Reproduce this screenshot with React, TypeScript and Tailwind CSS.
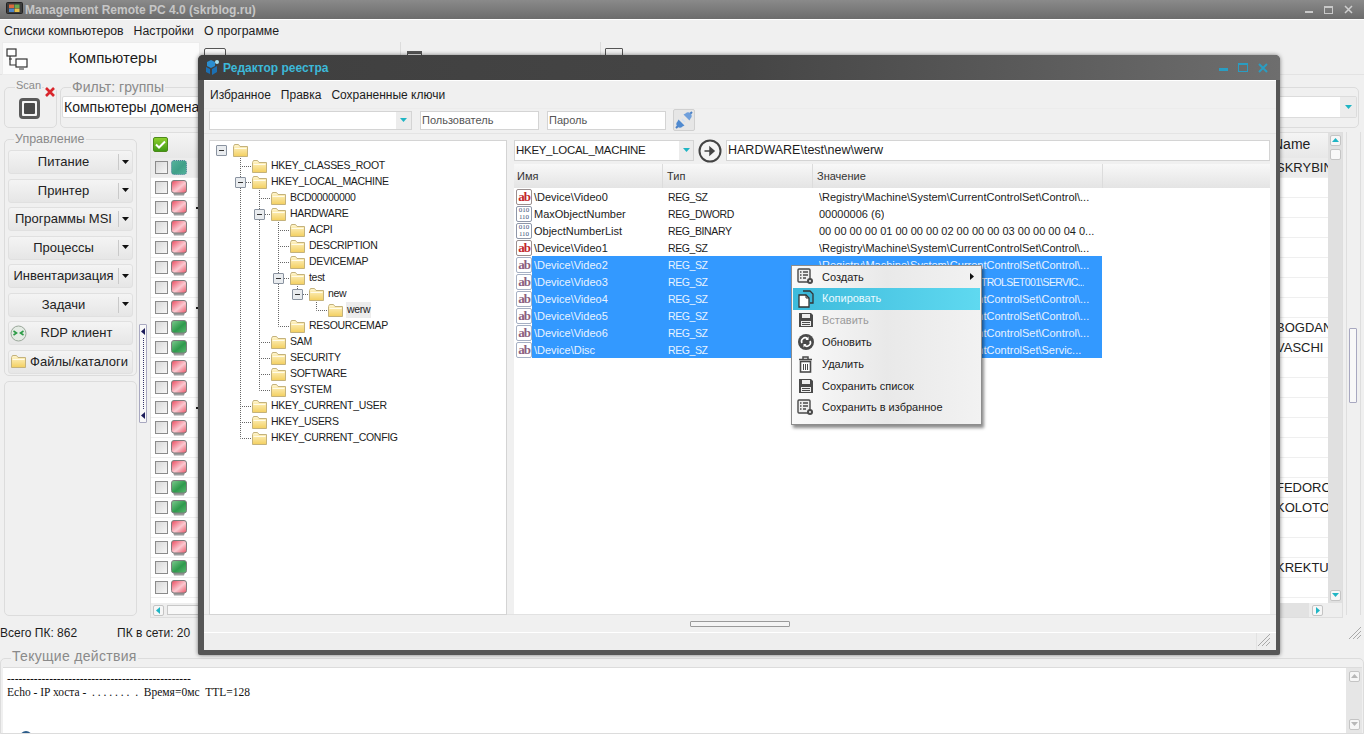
import type { ReactNode } from "react";

const ui = "[font-family:'Liberation_Sans',Arial,sans-serif]";

type TreeNode = { label: string; depth: number; open?: boolean };

const treeNodes: TreeNode[] = [
  { label: "", depth: 0, open: true },
  { label: "HKEY_CLASSES_ROOT", depth: 1 },
  { label: "HKEY_LOCAL_MACHINE", depth: 1, open: true },
  { label: "BCD00000000", depth: 2 },
  { label: "HARDWARE", depth: 2, open: true },
  { label: "ACPI", depth: 3 },
  { label: "DESCRIPTION", depth: 3 },
  { label: "DEVICEMAP", depth: 3 },
  { label: "test", depth: 3, open: true },
  { label: "new", depth: 4, open: true },
  { label: "werw", depth: 5 },
  { label: "RESOURCEMAP", depth: 3 },
  { label: "SAM", depth: 2 },
  { label: "SECURITY", depth: 2 },
  { label: "SOFTWARE", depth: 2 },
  { label: "SYSTEM", depth: 2 },
  { label: "HKEY_CURRENT_USER", depth: 1 },
  { label: "HKEY_USERS", depth: 1 },
  { label: "HKEY_CURRENT_CONFIG", depth: 1 },
];

const ctl = "\\Registry\\Machine\\System\\CurrentControlSet\\Control\\...";

const regRows = [
  { name: "\\Device\\Video0", type: "REG_SZ", value: ctl, kind: "sz" },
  { name: "MaxObjectNumber", type: "REG_DWORD", value: "00000006 (6)", kind: "bin" },
  { name: "ObjectNumberList", type: "REG_BINARY", value: "00 00 00 00 01 00 00 00 02 00 00 00 03 00 00 00 04 0...", kind: "bin" },
  { name: "\\Device\\Video1", type: "REG_SZ", value: ctl, kind: "sz" },
  { name: "\\Device\\Video2", type: "REG_SZ", value: ctl, kind: "sz", sel: true },
  { name: "\\Device\\Video3", type: "REG_SZ", value: "\\REGISTRY\\MACHINE\\SYSTEM\\CONTROLSET001\\SERVIC...", kind: "sz", sel: true, caps: true },
  { name: "\\Device\\Video4", type: "REG_SZ", value: ctl, kind: "sz", sel: true },
  { name: "\\Device\\Video5", type: "REG_SZ", value: ctl, kind: "sz", sel: true },
  { name: "\\Device\\Video6", type: "REG_SZ", value: ctl, kind: "sz", sel: true },
  { name: "\\Device\\Disc", type: "REG_SZ", value: "\\Registry\\Machine\\System\\CurrentControlSet\\Servic...", kind: "sz", sel: true },
];

// row index -> surname visible to the right of the dialog
const names: Record<number, string> = { 0: "SKRYBIN", 8: "BOGDAN", 9: "VASCHI", 16: "FEDORO", 17: "KOLOTO", 20: "KREKTU" };
const greenRows = [8, 9, 16, 17, 20];
const speckRows = [2, 7, 12];

const sideButtons = ["Питание", "Принтер", "Программы MSI", "Процессы", "Инвентаризация", "Задачи"];

function Folder() {
  return (
    <svg width="15" height="13" viewBox="0 0 15 13" className="shrink-0">
      <defs>
        <linearGradient id="fold" x1="0" y1="0" x2="0" y2="1">
          <stop offset="0" stopColor="#fff6cf" />
          <stop offset="1" stopColor="#f3cf5f" />
        </linearGradient>
      </defs>
      <path d="M.5 2.500V12.500h14V2.500H7L5.500.5h-4z" fill="url(#fold)" stroke="#c4b27c" />
      <path d="M1.500 4.500h12" stroke="#fffbe8" />
    </svg>
  );
}

function Monitor({ tone }: { tone: "red" | "green" | "teal" }) {
  const stops =
    tone === "red"
      ? ["#e8465a", "#fbc9d1", "#ea5063"]
      : tone === "green"
        ? ["#7fca90", "#2f9a4c", "#5dba74"]
        : ["#56b39c", "#3f9f88", "#56b39c"];
  const id = `mon-${tone}`;
  return (
    <svg width="16" height="16" viewBox="0 0 16 16" className="shrink-0">
      <defs>
        <linearGradient id={id} x1="0" y1="0" x2="1" y2="1">
          <stop offset="0" stopColor={stops[0]} />
          <stop offset=".55" stopColor={stops[1]} />
          <stop offset="1" stopColor={stops[2]} />
        </linearGradient>
      </defs>
      {tone !== "teal" && <path d="M2 12h12l-1 3.500H3z" fill="#9c9c9c" />}
      <rect x=".5" y=".5" width="15" height={tone === "teal" ? 14 : 12.5} rx="2.500" fill={`url(#${id})`} stroke={tone === "teal" ? "#4a7f9a" : "#7d7d7d"} strokeDasharray={tone === "teal" ? "1 1" : undefined} />
    </svg>
  );
}

function CheckBox() {
  return <span className="block w-[13px] h-[13px] shrink-0 border border-[#8b8b8b] bg-gradient-to-br from-[#d8d8d8] to-[#f6f6f6]" />;
}

function Arrow({ dir = "down", color = "#1fb5c4" }: { dir?: "down" | "up" | "left" | "right"; color?: string }) {
  const pts = { down: "0,1 7,1 3.5,5", up: "0,5 7,5 3.5,1", left: "5,0 5,7 1,3.5", right: "2,0 2,7 6,3.5" }[dir];
  return (
    <svg width="7" height="7" viewBox="0 0 7 7" className="shrink-0">
      <polygon points={pts} fill={color} />
    </svg>
  );
}

function ScrollBtn({ dir, color }: { dir: "down" | "up" | "left" | "right"; color?: string }) {
  return (
    <span className="flex items-center justify-center w-[11px] h-[11px] shrink-0 bg-[#f6f6f6] border border-[#c4c4c4] rounded-[2px]">
      <Arrow dir={dir} color={color} />
    </span>
  );
}

function GroupLabel({ children, className }: { children: ReactNode; className: string }) {
  return <span className={`absolute bg-[#f0f0f0] text-[#8a8a8a] leading-none ${className}`}>{children}</span>;
}

function MenuIcon({ name }: { name: string }) {
  const c = "#4a4a4a";
  if (name === "list")
    return (
      <svg width="17" height="17" viewBox="0 0 17 17">
        <rect x="1" y="1" width="12" height="13" rx="1" fill="#eee" stroke={c} strokeWidth="1.400" />
        <path d="M3 4h1.500M6 4h5M3 7h1.500M6 7h5M3 10h1.500M6 10h3" stroke={c} strokeWidth="1.400" />
        <circle cx="13" cy="13" r="3" fill={c} />
        <circle cx="13" cy="13" r="1" fill="#eee" />
      </svg>
    );
  if (name === "copy")
    return (
      <svg width="18" height="18" viewBox="0 0 18 18">
        <path d="M6 1h7l3 3v9h-3" fill="#39b5d6" stroke="#333" strokeWidth="1.300" />
        <path d="M2 5h7l3 3v9H2z" fill="#fff" stroke="#333" strokeWidth="1.300" />
        <path d="M9 5v3h3" fill="none" stroke="#333" />
      </svg>
    );
  if (name === "save")
    return (
      <svg width="16" height="16" viewBox="0 0 16 16">
        <path d="M1 1h12l2 2v12H1z" fill={c} />
        <rect x="4" y="2" width="8" height="4" fill="#eee" />
        <rect x="3" y="9" width="10" height="5" fill="#eee" />
        <path d="M4 10.500h8M4 12.500h8" stroke={c} />
      </svg>
    );
  if (name === "refresh")
    return (
      <svg width="16" height="16" viewBox="0 0 16 16">
        <circle cx="8" cy="8" r="8" fill={c} />
        <path d="M4 9a3.500 3.500 0 0 1 5.500-4.200M12 7a3.500 3.500 0 0 1-5.500 4.200" fill="none" stroke="#fff" strokeWidth="1.600" />
        <path d="M10.500 2.500v3.500H7.500zM5.500 13.500V10h3z" fill="#fff" />
      </svg>
    );
  return (
    <svg width="15" height="17" viewBox="0 0 15 17">
      <path d="M1 3.500h13M5 3V1h5v2" fill="none" stroke={c} strokeWidth="1.500" />
      <rect x="2.500" y="5.500" width="10" height="10.500" fill="#fff" stroke={c} strokeWidth="1.600" />
      <path d="M5.500 8v6M7.500 8v6M9.500 8v6" stroke={c} />
    </svg>
  );
}

function RegIcon({ kind, selected }: { kind: string; selected?: boolean }) {
  if (kind === "sz")
    return (
      <span className={`flex items-end justify-center w-[16px] h-[16px] shrink-0 border ${selected ? "border-[#a6b0c4] text-[#8b5f80]" : "border-[#9a8f8f] text-[#c2272d]"} rounded-[2px] bg-white leading-none`}>
        <span className="[font-family:'Liberation_Serif',serif] text-[13px] font-bold tracking-[-1px] leading-[14px]">ab</span>
      </span>
    );
  return (
    <span className="flex flex-col items-center justify-center w-[16px] h-[16px] shrink-0 border border-[#8f97a8] rounded-[2px] bg-white text-[#3c4f78] [font-family:'Liberation_Serif',serif] text-[7px] leading-[7px]">
      <span>010</span>
      <span>110</span>
    </span>
  );
}

function Tree() {
  const rowH = 16;
  const lines: ReactNode[] = [];
  treeNodes.forEach((n, i) => {
    if (n.depth === 0) return;
    let p = i - 1;
    while (treeNodes[p].depth >= n.depth) p--;
    const x = 12.5 + 19 * n.depth - 1;
    const y = rowH * i + 8.5;
    lines.push(<path key={i} d={`M${x} ${rowH * p + 14}V${y}H${x + 11}`} fill="none" stroke="#666" strokeDasharray="1 1" />);
  });
  return (
    <div className="relative w-[298px] h-[475px] shrink-0 bg-white border border-[#d4d4d4] pt-[1px]">
      <svg className="absolute left-0 top-[1px] w-[200px] h-[320px]" viewBox="0 0 200 320">
        {lines}
      </svg>
      {treeNodes.map((n, i) => (
        <div key={i} className="relative flex items-center h-[16px] text-[10.5px] tracking-[-0.3px] text-[#1c1c1c]">
          <span className="shrink-0 w-[17px]" />
          <span className="shrink-0" style={{ width: 19 * n.depth }} />
          {n.open ? (
            <span
              className="absolute flex items-center justify-center w-[11px] h-[11px] bg-[#e9ecef] border border-[#8a93a0] rounded-[1px]"
              style={{ left: 6 + 19 * n.depth, top: 3 }}
            >
              <span className="block w-[5px] h-[1px] bg-[#333]" />
            </span>
          ) : null}
          <span className="ml-[6px]">
            <Folder />
          </span>
          {n.label && <span className={`ml-[3px] px-[1px] whitespace-nowrap ${n.label === "werw" ? "bg-[#ececec]" : ""}`}>{n.label}</span>}
        </div>
      ))}
    </div>
  );
}

function ContextMenu() {
  const items = [
    { icon: "list", label: "Создать", sub: true },
    { icon: "copy", label: "Копировать", active: true },
    { icon: "save", label: "Вставить", disabled: true },
    { icon: "refresh", label: "Обновить" },
    { icon: "trash", label: "Удалить" },
    { icon: "save", label: "Сохранить список" },
    { icon: "list", label: "Сохранить в избранное" },
  ];
  return (
    <div className="absolute left-[279px] top-[125px] w-[191px] h-[160px] px-[1px] border border-[#8d8d8d] bg-gradient-to-r from-[#fafafa] via-[#e9e9e9] to-[#f2f2f2] shadow-[2px_3px_3px_rgba(0,0,0,0.45)] text-[11px] text-[#222]">
      {items.map((it) => (
        <div
          key={it.label}
          className={`flex items-center h-[21.8px] ${it.active ? "bg-gradient-to-r from-[#3dbbdc] to-[#5fd9f0] text-[#eafaff]" : ""} ${it.disabled ? "text-[#9a9a9a]" : ""}`}
        >
          <span className="flex justify-center w-[29px] pr-[4px] shrink-0">
            <MenuIcon name={it.icon} />
          </span>
          <span className="flex-1 whitespace-nowrap">{it.label}</span>
          {it.sub && (
            <span className="mr-[5px]">
              <Arrow dir="right" color="#111" />
            </span>
          )}
        </div>
      ))}
    </div>
  );
}

function RegistryList() {
  return (
    <div className="relative flex-1 flex flex-col min-w-0">
      <div className="flex items-center h-[21px] shrink-0 ml-[2px] gap-[5px]">
        <div className="flex items-center w-[180px] h-[21px] bg-white border border-[#d4d4d4] text-[11.5px] tracking-[-0.3px] pl-[1px]">
          <span className="flex-1">HKEY_LOCAL_MACHINE</span>
          <span className="flex items-center justify-center w-[14px] h-full bg-[#ececec]">
            <Arrow />
          </span>
        </div>
        <svg width="24" height="24" viewBox="0 0 24 24" className="shrink-0 -mx-[1px]">
          <circle cx="12" cy="12" r="10.500" fill="#f4f4f4" stroke="#444" strokeWidth="2" />
          <path d="M6.500 12h7M12 8.500l4 3.500-4 3.500z" fill="#444" stroke="#444" strokeWidth="1.500" />
        </svg>
        <div className="flex items-center flex-1 h-[21px] bg-white border border-[#d4d4d4] text-[12.5px] pl-[1px]">HARDWARE\test\new\werw</div>
      </div>
      <div className="flex h-[24px] mt-[3px] shrink-0 ml-[2px] bg-gradient-to-b from-[#f8f8f8] to-[#e4e4e4] text-[11px] text-[#333] items-center">
        <span className="w-[149px] h-full flex items-center pl-[3px] border-r border-[#dcdcdc]">Имя</span>
        <span className="w-[150px] h-full flex items-center pl-[4px] border-r border-[#dcdcdc]">Тип</span>
        <span className="w-[290px] h-full flex items-center pl-[4px] border-r border-[#dcdcdc]">Значение</span>
      </div>
      <div className="relative flex-1 ml-[2px] bg-white text-[11px] text-[#1c1c1c]">
        {regRows.map((r) => (
          <div key={r.name} className="flex items-center h-[17px] pl-[2px] w-[588px]">
            <RegIcon kind={r.kind} selected={r.sel} />
            <div className={`flex items-center h-full flex-1 min-w-0 pt-[2px] ${r.sel ? "bg-[#3399ff] text-[#e8f3ff]" : ""}`}>
              <span className="w-[136px] pl-[2px] shrink-0 whitespace-nowrap">{r.name}</span>
              <span className="w-[151px] shrink-0 text-[10.5px] tracking-[-0.4px]">{r.type}</span>
              <span className={`whitespace-nowrap overflow-hidden ${r.caps ? "text-[10.5px] tracking-[-0.65px]" : ""}`}>{r.value}</span>
            </div>
          </div>
        ))}
      </div>
      <ContextMenu />
    </div>
  );
}

function RegistryDialog() {
  return (
    <div className={`absolute left-[198px] top-[55px] w-[1082px] h-[600px] flex flex-col rounded-t-[5px] rounded-b-[2px] bg-[#565656] shadow-[0_0_4px_rgba(0,0,0,0.5)] pl-[6px] pr-[4px] pb-[5px] ${ui}`}>
      <div className="flex items-center h-[25px] shrink-0 -ml-[6px] -mr-[4px] px-[6px] rounded-t-[5px] bg-gradient-to-r from-[#3f3f3f] via-[#454545] to-[#6e6e6e]">
        <svg width="16" height="18" viewBox="0 0 16 18" className="shrink-0">
          <path d="M7 1l4 2v4l-4 2-4-2V3z" fill="#2b8ed0" />
          <path d="M2 8l4 2v5l-4-2zM8 10l5-3v6l-5 3z" fill="#1c70b4" />
          <circle cx="13" cy="3" r="2" fill="#a8e1ef" />
        </svg>
        <span className="ml-[3px] flex-1 text-[12px] font-bold text-[#3cb9d9]">Редактор реестра</span>
        <span className="flex items-center gap-[10px] pr-[6px]">
          <span className="block w-[9px] h-[3px] mt-[4px] bg-[#2a9dc2]" />
          <span className="block w-[10px] h-[9px] border border-[#2a9dc2] border-t-[2px]" />
          <svg width="10" height="10" viewBox="0 0 10 10">
            <path d="M1 1l8 8M9 1l-8 8" stroke="#2a9dc2" strokeWidth="2" />
          </svg>
        </span>
      </div>
      <div className="flex-1 min-h-0 flex flex-col bg-[#f0f0f0]">
        <div className="flex items-center h-[28px] shrink-0 gap-[10px] pl-[6px] text-[12px] text-[#1c1c1c] border-t border-white">
          <span>Избранное</span>
          <span>Правка</span>
          <span>Сохраненные ключи</span>
        </div>
        <div className="flex items-center h-[26px] shrink-0 pl-[5px] text-[11px] text-[#555] pb-[3px] border-t border-[#ececec]">
          <div className="flex items-center justify-end w-[203px] h-[19px] bg-white border border-[#d4d4d4]">
            <span className="flex items-center justify-center w-[15px] h-full bg-[#ececec]">
              <Arrow />
            </span>
          </div>
          <div className="flex items-center w-[119px] h-[19px] ml-[8px] pl-[1px] bg-white border border-[#d4d4d4]">Пользователь</div>
          <div className="flex items-center w-[119px] h-[19px] ml-[8px] pl-[1px] bg-white border border-[#d4d4d4]">Пароль</div>
          <div className="flex items-center justify-center w-[22px] h-[22px] ml-[7px] bg-[#e6e6e6] border border-[#d0d0d0] rounded-[2px]">
            <svg width="18" height="18" viewBox="0 0 18 18">
              <path d="M1 17l4-4M13 5l4-4" stroke="#4a7fc4" strokeWidth="2" />
              <path d="M3.500 8.500l6 6-2 1a3 3 0 0 1-5-5z" fill="#4f8ad0" />
              <path d="M8.500 3.500l6 6 1-2a3 3 0 0 0-5-5z" fill="#6f9fdb" />
              <path d="M7 8l3 3" stroke="#cfe0f5" strokeWidth="1.500" />
            </svg>
          </div>
        </div>
        <div className="flex h-[481px] shrink-0 pl-[5px] pt-[6px] pr-[6px] gap-[5px] border-t border-[#e4e4e4] -mt-[1px]">
          <Tree />
          <RegistryList />
        </div>
        <div className="flex items-center justify-center h-[18px] pt-[1px] shrink-0 border-t border-[#e2e2e2]">
          <span className="block w-[100px] h-[6px] bg-[#f4f4f4] border border-[#9a9a9a] rounded-[1px]" />
        </div>
        <div className="flex-1 flex justify-end border-t border-white bg-[#eeeeee]">
          <span className="flex items-end justify-end w-[20px] pr-[5px] pb-[3px] border-l border-[#e2e2e2]">
            <Grip />
          </span>
        </div>
      </div>
    </div>
  );
}

function Grip() {
  return (
    <svg width="14" height="14" viewBox="0 0 14 14">
      <path d="M1 13L13 1M5 13l8-8M9 13l4-4" stroke="#a9a9a9" strokeWidth="1" />
    </svg>
  );
}

function SideButton({ children }: { children: ReactNode }) {
  return <div className="flex items-center h-[24px] bg-gradient-to-b from-[#f4f4f4] to-[#e6e6e6] border border-[#e0e0e0] rounded-[3px]">{children}</div>;
}

function SidePanel() {
  return (
    <div className="flex flex-col w-[133px] ml-[4px] shrink-0 pb-[2px]">
      <div className="relative h-[237px] mt-[10px] shrink-0 border border-[#dcdcdc] rounded-[5px] pt-[10px] px-[3px]">
        <GroupLabel className="left-[9px] -top-[7px] px-[1px] text-[12.5px]">Управление</GroupLabel>
        <div className="flex flex-col gap-[4.500px] text-[13px] text-[#222]">
          {sideButtons.map((label) => (
            <SideButton key={label}>
              <span className="flex-1 text-center whitespace-nowrap">{label}</span>
              <span className="flex items-center justify-center w-[14px] h-[16px] border-l border-[#c9c9c9]">
                <Arrow color="#111" />
              </span>
            </SideButton>
          ))}
          <SideButton>
            <svg width="17" height="17" viewBox="0 0 17 17" className="ml-[1px] shrink-0">
              <circle cx="8.500" cy="8.500" r="7.500" fill="#e4ebe4" stroke="#9aa79a" />
              <path d="M3.500 6l3 2-3 2M13.500 6l-3 2 3 2" fill="none" stroke="#2b9b45" strokeWidth="1.600" />
            </svg>
            <span className="flex-1 text-center pr-[6px]">RDP клиент</span>
          </SideButton>
          <SideButton>
            <span className="ml-[2px]">
              <Folder />
            </span>
            <span className="flex-1 text-center whitespace-nowrap">Файлы/каталоги</span>
          </SideButton>
        </div>
      </div>
      <div className="flex-1 mt-[5px] border border-[#dcdcdc] rounded-[5px]" />
    </div>
  );
}

function ComputerGrid() {
  const rows = Array.from({ length: 22 }, (_, i) => i);
  return (
    <div className="relative flex-1 min-w-0 flex flex-col mt-[3px] bg-[#eeeeee] border border-[#dedede]">
      <div className="flex-1 flex min-h-0">
        <div className="flex-1 min-w-0 overflow-hidden bg-white">
          <div className="flex items-center h-[25px] pb-[3px] bg-gradient-to-b from-[#f4f4f4] to-[#e8e8e8]">
            <span className="flex items-center justify-center w-[15px] h-[15px] ml-[2px] rounded-[2px] bg-gradient-to-b from-[#8ccf2c] to-[#3f9a14] border border-[#4c8a1a]">
              <svg width="11" height="9" viewBox="0 0 11 9">
                <path d="M1 4.500l3 3 6-6" fill="none" stroke="#fff" strokeWidth="2" />
              </svg>
            </span>
            <span className="flex-1" />
            <span className="w-[55px] shrink-0 text-[14px] text-[#222] whitespace-nowrap overflow-hidden">Name</span>
          </div>
          {rows.map((i) => (
            <div key={i} className={`flex items-center h-[20px] border-b border-[#efefef] ${i === 0 ? "bg-[#ececec]" : ""}`}>
              <span className="ml-[4px]">
                <CheckBox />
              </span>
              <span className="ml-[3px]">
                <Monitor tone={i === 0 ? "teal" : greenRows.includes(i) ? "green" : "red"} />
              </span>
              {speckRows.includes(i) && <span className="block w-[2px] h-[2px] ml-[9px] bg-[#222]" />}
              <span className="flex-1" />
              <span className="w-[52px] shrink-0 text-[13px] text-[#222] whitespace-nowrap overflow-hidden">{names[i] ?? ""}</span>
            </div>
          ))}
        </div>
        <div className="flex flex-col items-center justify-between w-[14px] shrink-0 py-[2px] bg-[#e0e0e0]">
          <div className="flex flex-col gap-[3px]">
            <ScrollBtn dir="up" />
            <span className="block w-[11px] h-[11px] bg-[#f8f8f8] border border-[#c4c4c4] rounded-[2px]" />
          </div>
          <ScrollBtn dir="down" />
        </div>
      </div>
      <div className="flex items-center h-[14px] shrink-0 pl-[2px] pr-[19px] gap-[3px]">
        <ScrollBtn dir="left" />
        <span className="block w-[34px] h-[10px] bg-[#f8f8f8] border border-[#c8c8c8]" />
        <span className="flex-1 h-full bg-[#e2e2e2]" />
        <ScrollBtn dir="right" />
      </div>
    </div>
  );
}

export default function App() {
  return (
    <div className={`relative w-[1364px] h-[734px] overflow-hidden flex flex-col bg-[#f0f0f0] text-[#1c1c1c] ${ui}`}>
      {/* main window title */}
      <div className="flex items-center h-[20px] shrink-0 pl-[6px] pr-[11px] bg-gradient-to-b from-[#8a8a8a] to-[#6c6c6c] border-b border-white">
        <svg width="17" height="15" viewBox="0 0 17 15" className="shrink-0">
          <rect x=".5" y=".5" width="16" height="11" rx="1" fill="#3d3d3d" stroke="#222" />
          <rect x="3" y="2.500" width="5" height="3.500" fill="#d96a3c" />
          <rect x="8.500" y="2.500" width="5" height="3.500" fill="#6aa84f" />
          <rect x="3" y="6.500" width="5" height="3.500" fill="#4d86c6" />
          <rect x="8.500" y="6.500" width="5" height="3.500" fill="#e5c04a" />
          <rect x="4" y="12" width="9" height="2.500" fill="#777" />
        </svg>
        <span className="ml-[2px] flex-1 text-[12px] font-bold text-[#c6c6c6] whitespace-nowrap">Management Remote PC 4.0 (skrblog.ru)</span>
        <span className="flex items-center gap-[11px]">
          <span className="block w-[8px] h-[2px] mt-[5px] bg-[#c8c8c8]" />
          <span className="block w-[9px] h-[8px] border border-[#c8c8c8] border-t-[2px]" />
          <svg width="9" height="9" viewBox="0 0 9 9">
            <path d="M1 1l7 7M8 1l-7 7" stroke="#cfcfcf" strokeWidth="1.500" />
          </svg>
        </span>
      </div>

      {/* menu */}
      <div className="flex items-center h-[22px] shrink-0 pl-[4px] gap-[10px] text-[12.3px]">
        <span>Списки компьютеров</span>
        <span>Настройки</span>
        <span>О программе</span>
      </div>

      {/* ribbon tabs */}
      <div className="flex h-[33px] shrink-0 items-start border-b border-[#e3e3e3]">
        <div className="flex items-center w-[198px] h-[33px] ml-[2px] bg-[#fbfbfb] border border-[#ececec]">
          <svg width="24" height="24" viewBox="0 0 24 24" className="ml-[2px] shrink-0">
            <g fill="#fff" stroke="#333" strokeWidth="1.200">
              <rect x="2" y="2" width="9" height="7" />
              <rect x="11" y="12" width="11" height="8" />
              <path d="M5 9v9h6" fill="none" />
              <path d="M4 12h3M14 22h5" fill="none" />
            </g>
          </svg>
          <span className="flex-1 text-center pr-[2px] text-[15px]">Компьютеры</span>
        </div>
        <div className="flex items-start w-[201px] h-[33px] border-r border-[#dcdcdc] pl-[4px] pt-[6px]">
          <span className="block w-[22px] h-[14px] border border-[#555] rounded-[2px] bg-[#f7f7f7]" />
        </div>
        <div className="flex items-start w-[200px] h-[33px] border-r border-[#dcdcdc] pl-[6px] pt-[9px]">
          <span className="block w-[15px] h-[10px] border-t-[3px] border-x border-[#555]" />
        </div>
        <div className="pl-[4px] pt-[6px]">
          <span className="block w-[18px] h-[14px] border border-[#555] rounded-[1px]" />
        </div>
      </div>

      {/* scan + filter */}
      <div className="flex h-[54px] shrink-0 pl-[4px] pr-[5px] pt-[12px] gap-[3px]">
        <div className="relative flex items-center justify-center w-[53px] h-[41px] border border-[#dcdcdc] rounded-[5px]">
          <GroupLabel className="left-[10px] -top-[8px] px-[1px] text-[11px]">Scan</GroupLabel>
          <span className="absolute right-[0px] -top-[2px] bg-[#f0f0f0] leading-none">
            <svg width="12" height="12" viewBox="0 0 12 12">
              <path d="M2 2l8 8M10 2l-8 8" stroke="#d9262c" strokeWidth="2.600" />
            </svg>
          </span>
          <span className="flex items-center justify-center w-[21px] h-[21px] mr-[3px] mt-[2px] border-[3px] border-[#5a5a5a] rounded-[4px] bg-[#f5f5f5]">
            <span className="block w-[11px] h-[11px] bg-[#4a4a4a] rounded-[1px]" />
          </span>
        </div>
        <div className="relative flex-1 h-[41px] border border-[#dcdcdc] rounded-[5px] pt-[8px] px-[1px]">
          <GroupLabel className="left-[10px] -top-[8px] px-[1px] text-[14px]">Фильт: группы</GroupLabel>
          <div className="flex items-center h-[22px] bg-white border border-[#dcdcdc] rounded-[2px] text-[14px] pl-[1px]">
            <span className="flex-1">Компьютеры домена</span>
            <span className="flex items-center justify-center w-[16px] h-full bg-[#ececec]">
              <Arrow />
            </span>
          </div>
        </div>
      </div>

      {/* body */}
      <div className="flex h-[489px] shrink-0">
        <SidePanel />
        <div className="flex items-center w-[13px] shrink-0 justify-center">
          <span className="flex flex-col items-center justify-between w-[8px] h-[99px] -mt-[1px] mr-[1px] py-[3px] bg-[#f8f8f8] border border-[#a8a8c0] rounded-[1px]">
            <Arrow dir="left" color="#1c1c5a" />
            <span className="flex-1 border-l border-dotted border-[#33336a] my-[3px]" />
            <Arrow dir="left" color="#1c1c5a" />
          </span>
        </div>
        <ComputerGrid />
        <div className="flex items-center justify-center w-[15px] shrink-0 mx-[3px] my-[3px] border-x border-[#dedede]">
          <span className="block w-[8px] h-[75px] -mt-[16px] mr-[2px] bg-[#f8f8f8] border border-[#a8a8c0] rounded-[1px]" />
        </div>
      </div>

      {/* status */}
      <div className="relative flex items-center h-[28px] pt-[2px] shrink-0 text-[12px]">
        <span className="w-[117px] whitespace-nowrap">Всего ПК: 862</span>
        <span className="whitespace-nowrap">ПК в сети: 20</span>
        <span className="ml-auto mr-[2px]">
          <Grip />
        </span>
      </div>

      {/* current actions */}
      <div className="relative flex-1 min-h-0 mt-[12px] pt-[8px] border border-[#dcdcdc] rounded-t-[5px] pl-[2px] pr-[1px]">
        <GroupLabel className="left-[10px] -top-[10px] px-[1px] text-[14px] tracking-[0.3px]">Текущие действия</GroupLabel>
        <div className="flex h-full border-t border-[#dcdcdc]">
          <div className="flex-1 min-w-0 h-full overflow-hidden bg-white pt-[3px] pl-[4px] [font-family:'Liberation_Serif',serif] text-[11.5px] leading-[14px] text-[#111]">
            <div>------------------------------------------------</div>
            <div className="whitespace-pre">Echo - IP хоста -  . . . . . . .  .  Время=0мс  TTL=128</div>
            <div className="mt-[32px] ml-[13px] w-[12px] h-[12px] rounded-full border-2 border-[#2b5c8a]" />
          </div>
          <div className="flex flex-col items-center justify-between w-[16px] shrink-0 py-[3px] bg-[#e6e6e6]">
            <ScrollBtn dir="up" color="#b8b8b8" />
            <ScrollBtn dir="down" color="#b8b8b8" />
          </div>
        </div>
      </div>

      <RegistryDialog />
    </div>
  );
}
